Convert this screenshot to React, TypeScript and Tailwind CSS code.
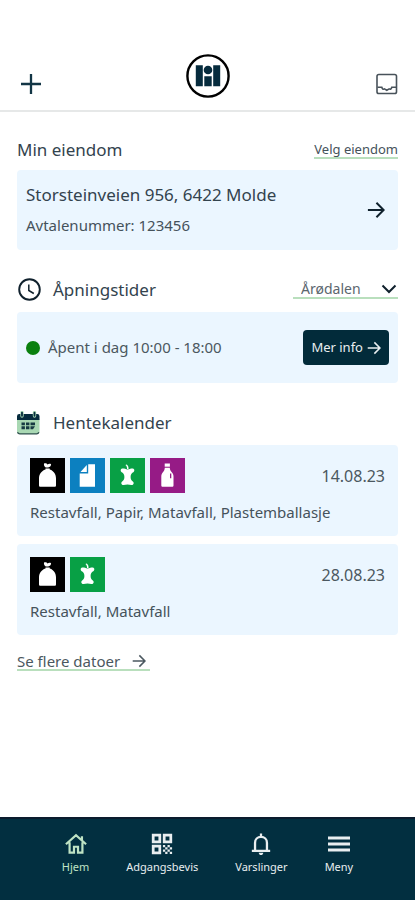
import React from 'react';

type WasteKind = 'rest' | 'paper' | 'food' | 'plastic';

interface Pickup {
  date: string;
  kinds: WasteKind[];
}

const wasteNames: Record<WasteKind, string> = {
  rest: 'Restavfall',
  paper: 'Papir',
  food: 'Matavfall',
  plastic: 'Plastemballasje',
};

const wasteColors: Record<WasteKind, string> = {
  rest: 'bg-black',
  paper: 'bg-[#0c80c0]',
  food: 'bg-[#08a045]',
  plastic: 'bg-[#961b86]',
};

const pickups: Pickup[] = [
  { date: '14.08.23', kinds: ['rest', 'paper', 'food', 'plastic'] },
  { date: '28.08.23', kinds: ['rest', 'food'] },
];

const Logo: React.FC = () => (
  <svg viewBox="0 0 44 44" className="size-11" role="img" aria-label="Logo">
    <circle cx="22" cy="22" r="20.6" fill="#fff" stroke="#000" strokeWidth="2.4" />
    <g fill="#062b3d">
      <path d="M9.800 11.300h7v21h-7zM27.200 11.300h7v21h-7zM18.300 22.300h7.400v10h-7.400z" />
      <circle cx="22" cy="16" r="4.300" />
    </g>
  </svg>
);

const Arrow: React.FC<{ className: string }> = ({ className }) => (
  <svg viewBox="0 0 20 20" fill="none" stroke="currentColor" strokeWidth="2.200" className={className} aria-hidden="true">
    <path d="M1 10h17M10.500 2l8 8-8 8" />
  </svg>
);

const ClockIcon: React.FC = () => (
  <svg viewBox="0 0 24 24" fill="none" stroke="#10212d" strokeWidth="1.900" className="size-6" aria-hidden="true">
    <circle cx="12.500" cy="11.500" r="10.300" />
    <path d="M11.800 6.500v6l5 3" strokeWidth="1.500" />
  </svg>
);

const CalendarIcon: React.FC = () => (
  <svg viewBox="0 0 24 24" className="size-6" aria-hidden="true">
    <path d="M0 8h22.500v12.500a2.500 2.500 0 0 1-2.500 2.500H2.500A2.500 2.500 0 0 1 0 20.500z" fill="#a9d8b3" />
    <path d="M.5 21.300c.5 1.100 1.200 1.500 2.200 1.500h17c1 0 1.700-.4 2.200-1.500" fill="none" stroke="#31504f" strokeWidth="1.200" />
    <path d="M0 9V5.200A2.200 2.200 0 0 1 2.200 3h18.100a2.200 2.200 0 0 1 2.200 2.200V9z" fill="#062b3d" />
    <path d="M5 1.600v3.400M17.500 1.600v3.400" stroke="#a9d8b3" strokeWidth="3.400" strokeLinecap="round" />
    <path d="M5 1.600v3.200M17.500 1.600v3.200" stroke="#062b3d" strokeWidth="1.800" strokeLinecap="round" />
    <path
      d="M4.500 11.500h3.400v2.700H4.500zM9 11.500h3.400v2.700H9zM13.500 11.500H18v2.700h-4.500zM4.500 15.300h3.400v2.900H4.500zM9 15.300h3.400v2.900H9zM13.500 15.300H18l-2 2.900h-2.500z"
      fill="#173a42"
    />
  </svg>
);

const WasteIcon: React.FC<{ kind: WasteKind }> = ({ kind }) => (
  <span className={`block size-[35px] ${wasteColors[kind]}`}>
    <svg viewBox="0 0 35 35" className="size-full" fill="#fff" aria-hidden="true">
      {kind === 'rest' && (
        <>
          <path d="M14 5.500c1.500-.8 2.800-.2 3.500 1 1.200-.8 2.600-.8 3.600-.2-.1 1.800-1.200 2.900-3 3.200h-2.300c-1.500-.8-2.100-2.200-1.800-4z" />
          <path d="M15.500 10.600h4.200v1c4.300 1.400 6.300 4.900 6.300 9v6.600c0 1-.5 1.500-1.500 1.500h-14c-1 0-1.500-.5-1.500-1.500v-6.600c0-4.100 2.200-7.600 6.500-9z" />
        </>
      )}
      {kind === 'paper' && (
        <>
          <path d="M18.200 6.300H25v22.400H9.700V15.500h8.500z" />
          <path d="M10.500 14l6.300-7v7z" />
        </>
      )}
      {kind === 'food' && (
        <>
          <path d="M17 11c.1-1.700-.3-2.800-1.600-3.900l1.300-.7c1.500 1.200 2 2.600 1.800 4.600z" />
          <path d="M11.500 10.800c1.800-.7 3.800.3 6 .7 2.200-.4 4.200-1.500 6-.7 1.300.7 1 2.700-.2 3.400-2 1-2.700 2.700-2.700 4.700s.8 3.500 2.500 4.900c1 1 .7 2.700-.6 3.100-1.700.5-3-.3-5-.3s-3.300.8-5 .3c-1.300-.4-1.600-2.100-.6-3.100 1.700-1.400 2.500-2.900 2.500-4.900s-.7-3.700-2.700-4.700c-1.200-.7-1.500-2.700-.2-3.400z" />
        </>
      )}
      {kind === 'plastic' && (
        <>
          <path d="M14.700 5.500h5.200v3.200h-5.200z" />
          <path d="M14.800 9.700h5c.1 2 .8 3.200 2 4.600 1.200 1.300 1.700 2.500 1.700 4.200v8.700c0 1-.5 1.500-1.500 1.500h-9.200c-1 0-1.500-.5-1.500-1.500v-8.700c0-1.700.5-2.900 1.600-4.200 1.200-1.400 1.800-2.600 1.900-4.600z" />
          <path d="M20 15.500h1.300v4.800H20z" fill="#961b86" />
        </>
      )}
    </svg>
  </span>
);

const PickupCard: React.FC<{ pickup: Pickup }> = ({ pickup }) => (
  <li className="rounded bg-[#ebf6ff] px-[13px] pt-[13px] pb-3">
    <div className="flex items-center justify-between">
      <div className="flex gap-[5px]">
        {pickup.kinds.map((kind) => (
          <WasteIcon key={kind} kind={kind} />
        ))}
      </div>
      <time className="text-base text-[#4b5860]">{pickup.date}</time>
    </div>
    <p className="mt-[7px] text-[15px] leading-6 text-[#45525b]">
      {pickup.kinds.map((kind) => wasteNames[kind]).join(', ')}
    </p>
  </li>
);

const navItems = [
  {
    label: 'Hjem',
    color: 'text-[#bfe3c4]',
    icon: <path d="M5 10v11.500h4.800V15h4.400v6.500H19V10M1 12.300 12 2.500l11 9.800M18.500 3.500v5" fill="none" stroke="currentColor" strokeWidth="2.400" />,
  },
  {
    label: 'Adgangsbevis',
    color: 'text-[#e9eef0]',
    icon: (
      <>
        <path d="M2.400 2.400h7.200v7.200H2.400zM14.400 2.400h7.200v7.200h-7.200zM2.400 14.400h7.200v7.200H2.400z" fill="none" stroke="currentColor" strokeWidth="3" />
        <path
          d="M13 13h2.500v2.500H13zM18 13h2.500v2.500H18zM15.500 15.500H18V18h-2.500zM20.500 15.500H23V18h-2.500zM13 18h2.500v2.500H13zM18 18h2.500v2.500H18zM15.500 20.500H18V23h-2.500zM20.500 20.500H23V23h-2.500z"
          fill="currentColor"
        />
      </>
    ),
  },
  {
    label: 'Varslinger',
    color: 'text-[#e9eef0]',
    icon: (
      <>
        <path d="M5.500 19v-8.500c0-3.700 2.700-6.300 6.500-6.300s6.500 2.600 6.500 6.300V19M2 19.500h20M12 .5v4" fill="none" stroke="currentColor" strokeWidth="2.500" />
        <path d="M9.500 21.500h5c-.2 1.500-1.200 2.500-2.500 2.500s-2.300-1-2.500-2.500z" fill="currentColor" />
      </>
    ),
  },
  {
    label: 'Meny',
    color: 'text-[#e9eef0]',
    icon: <path d="M0 5.500h24M0 12h24M0 18.500h24" stroke="currentColor" strokeWidth="3.200" />,
  },
];

const App: React.FC = () => {
  return (
    <div className="flex min-h-screen flex-col bg-white font-['Noto_Sans',sans-serif] text-[#33434e]">
      {/* Header */}
      <header className="flex items-end justify-between border-b-2 border-[#e6e8e8] px-[17px] pt-[54px] pb-3">
        <button aria-label="Legg til" className="flex size-7 items-center justify-center">
          <svg viewBox="0 0 20 20" className="size-5" stroke="#123545" strokeWidth="2.300">
            <path d="M10 0v20M0 10h20" />
          </svg>
        </button>
        <Logo />
        <button aria-label="Innboks" className="flex size-7 items-center justify-end">
          <svg viewBox="0 0 22 22" className="size-[22px]" fill="none" stroke="#48525a" strokeWidth="1.600">
            <rect x="1" y="1.500" width="19.500" height="19" rx="1.800" />
            <path d="M1.500 14.300h4.300c.4 1.600 1.400 2.400 2.600 1.600l2.400 1.400 2.400-1.400c1.200.8 2.200 0 2.600-1.600h4.200" />
          </svg>
        </button>
      </header>

      <main className="px-[17px] pt-6 pb-6">
        {/* Property */}
        <section>
          <div className="flex items-center justify-between pb-[6px]">
            <h2 className="text-[17px] leading-7">Min eiendom</h2>
            <a href="#" className="border-b-2 border-[#b9dfbd] text-[13px] leading-4 text-[#45525b]">
              Velg eiendom
            </a>
          </div>
          <a href="#" className="flex items-center justify-between rounded bg-[#ebf6ff] px-[9px] py-[10px]">
            <div>
              <p className="text-[17px] leading-[30px]">Storsteinveien 956, 6422 Molde</p>
              <p className="text-[15px] leading-[30px] text-[#45525b]">Avtalenummer: 123456</p>
            </div>
            <Arrow className="mr-1 size-[18px] text-[#10212d]" />
          </a>
        </section>

        {/* Opening hours */}
        <section className="mt-[26px]">
          <div className="flex items-center justify-between pb-2">
            <div className="flex items-center gap-3">
              <ClockIcon />
              <h2 className="text-[17px] leading-7">Åpningstider</h2>
            </div>
            <div className="grid w-[105px] items-center border-b-2 border-[#b9dfbd]">
              <select
                aria-label="Gjenvinningsstasjon"
                className="col-start-1 row-start-1 h-4 w-full appearance-none pl-2 text-[14px] leading-4 text-[#5b666e]"
              >
                <option>Årødalen</option>
              </select>
              <svg
                viewBox="0 0 16 16"
                className="pointer-events-none col-start-1 row-start-1 mr-px size-4 justify-self-end"
                fill="none"
                stroke="#10212d"
                strokeWidth="2"
                aria-hidden="true"
              >
                <path d="M1.500 4.500 8 11l6.500-6.500" />
              </svg>
            </div>
          </div>
          <div className="flex items-center justify-between rounded bg-[#ebf6ff] px-[9px] py-[18px]">
            <p className="flex items-center gap-2 text-[15px] text-[#4b5860]">
              <span className="size-[14px] rounded-full bg-[#0a800f]" />
              Åpent i dag 10:00 - 18:00
            </p>
            <button className="flex h-[35px] items-center gap-1 rounded bg-[#022b3a] px-2 text-[13px] text-[#e9eef0]">
              Mer info
              <Arrow className="size-[14px]" />
            </button>
          </div>
        </section>

        {/* Pickup calendar */}
        <section className="mt-[26px]">
          <div className="flex items-center gap-3 pb-2">
            <CalendarIcon />
            <h2 className="text-[17px] leading-7">Hentekalender</h2>
          </div>
          <ul className="flex flex-col gap-2">
            {pickups.map((pickup) => (
              <PickupCard key={pickup.date} pickup={pickup} />
            ))}
          </ul>
          <a
            href="#"
            className="mt-[18px] inline-flex items-center gap-3 border-b-2 border-[#b9dfbd] pr-1 text-[15px] leading-4 text-[#4b5860]"
          >
            Se flere datoer
            <Arrow className="size-[14px]" />
          </a>
        </section>
      </main>

      {/* Bottom navigation */}
      <nav className="mt-auto flex justify-center gap-[37px] border-t-2 border-[#0b1c2e] bg-[#022f40] pt-[14px] pb-[25px]">
        {navItems.map((item) => (
          <a key={item.label} href="#" className={`flex flex-col items-center gap-1 ${item.color}`}>
            <svg viewBox="0 0 24 24" className="size-[22px]" aria-hidden="true">
              {item.icon}
            </svg>
            <span className="text-[11px] leading-4">{item.label}</span>
          </a>
        ))}
      </nav>
    </div>
  );
};

export default App;
